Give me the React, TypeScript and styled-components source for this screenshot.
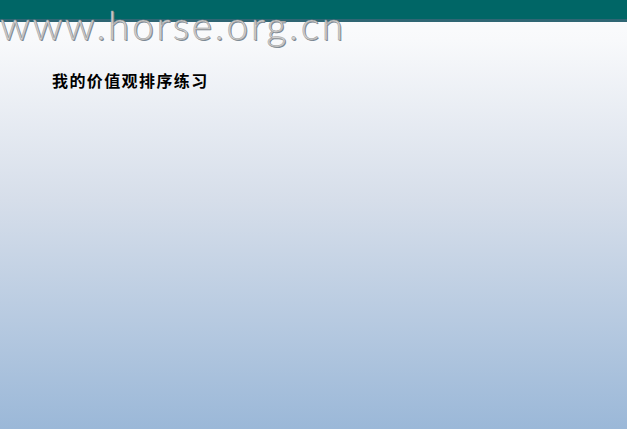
import React from "react";
import styled, { createGlobalStyle } from "styled-components";

const Global = createGlobalStyle`
  html, body { margin: 0; padding: 0; height: 100%; }
  body { background: #9cb9d9; }
  #root { height: 100%; }
`;

const Page = styled.div`
  width: 627px;
  height: 429px;
  display: flex;
  flex-direction: column;
  overflow: hidden;
  background: linear-gradient(to bottom, #fcfdfe 0px, #f8f9fb 40px, #d6deea 200px, #9bb8d8 429px);
`;

const Header = styled.header`
  position: relative;
  height: 22px;
  flex: none;
  background: #006666;
  border-bottom: 3px solid #2f6674;
  box-sizing: border-box;
`;

const Logo = styled.div`
  position: absolute;
  left: 0;
  top: 0;
  font-family: "Lato", "DejaVu Sans", sans-serif;
  font-weight: 300;
  font-size: 39px;
  line-height: 50px;
  letter-spacing: 2.6px;
  color: #d2d2d2;
  -webkit-text-stroke: 0.5px #9a9a9a;
  text-shadow: 1px 1px 0 #7a8894;
  white-space: nowrap;
`;

const Content = styled.main`
  padding: 48px 0 0 52px;
`;

const Title = styled.h1`
  margin: 0;
  font-family: "Noto Sans CJK SC", sans-serif;
  font-weight: 700;
  font-size: 16px;
  line-height: 20px;
  letter-spacing: 1.4px;
  color: #000;
`;

export default function App() {
  return (
    <>
      <Global />
      <Page>
        <Header>
          <Logo>www.horse.org.cn</Logo>
        </Header>
        <Content>
          <Title>我的价值观排序练习</Title>
        </Content>
      </Page>
    </>
  );
}
